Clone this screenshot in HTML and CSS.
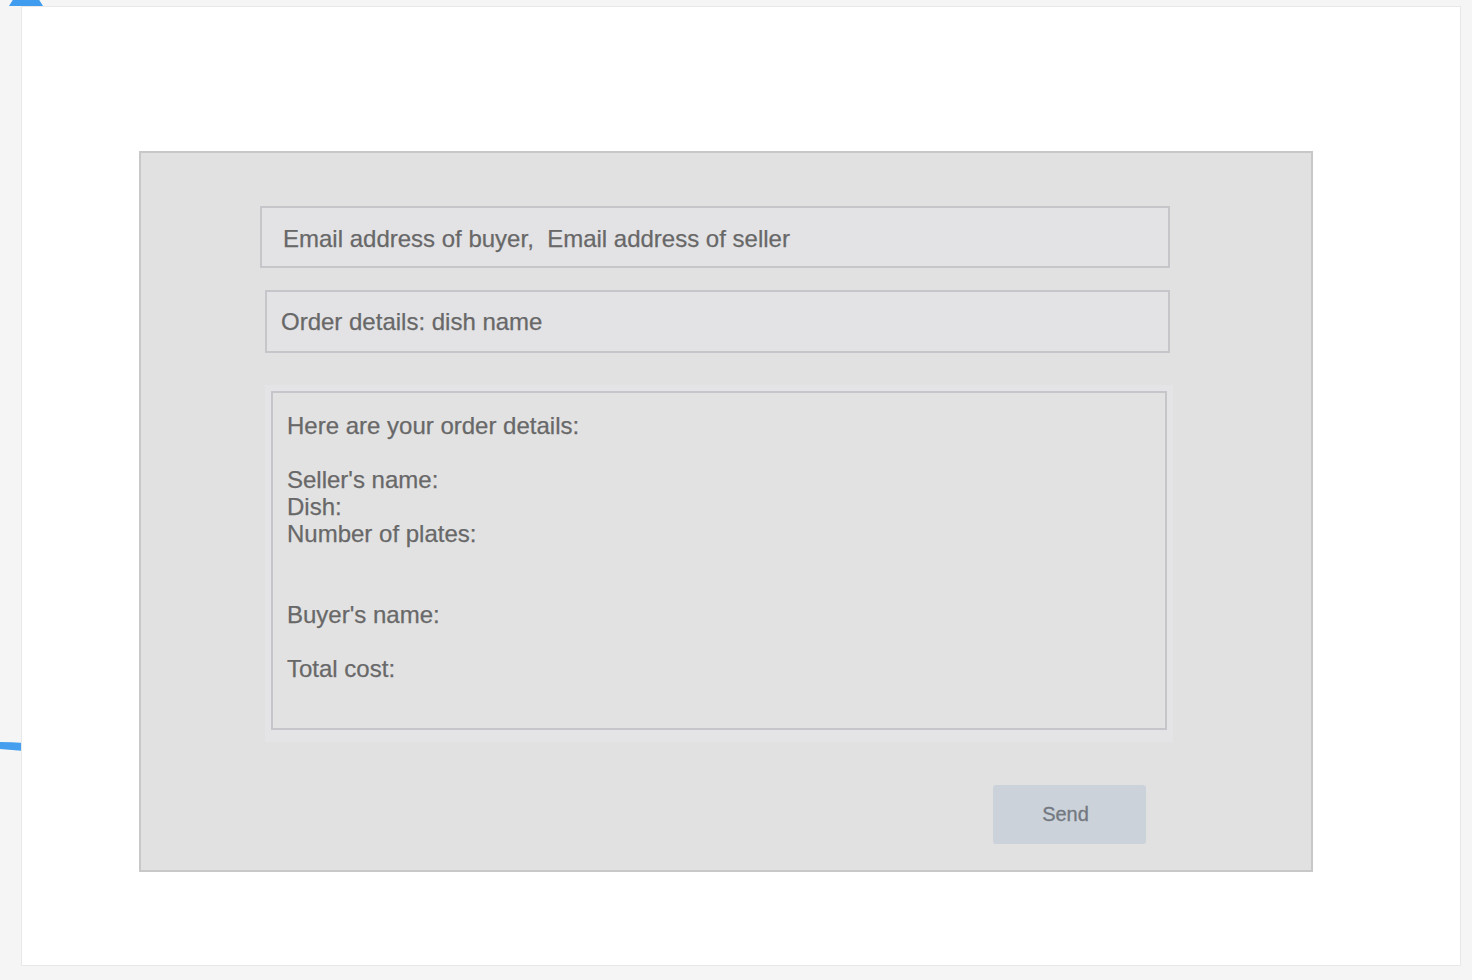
FILE: index.html
```html
<!DOCTYPE html>
<html lang="en">
<head>
<meta charset="utf-8">
<title>Order email</title>
<link rel="stylesheet" href="styles.css">
</head>
<body>
<svg class="deco deco-top" width="40" height="8" viewBox="0 0 40 8"><polygon points="0,8 5,0 29,0 34,8" fill="#3f9cef"/></svg>
<svg class="deco deco-left" width="24" height="12" viewBox="0 0 24 12"><path d="M0 1 Q12 1 24 2 L24 10 Q12 9 0 8 Z" fill="#459fee"/></svg>
<div class="card">
  <form class="panel">
    <div class="field field-1">Email address of buyer,&nbsp; Email address of seller</div>
    <div class="field field-2">Order details: dish name</div>
    <div class="area-wrap">
      <div class="area">Here are your order details:

Seller's name:
Dish:
Number of plates:


Buyer's name:

Total cost:</div>
    </div>
    <button type="button" class="send">Send</button>
  </form>
</div>
</body>
</html>
```
FILE: styles.css
```css
html, body {
  margin: 0;
  padding: 0;
}
body {
  background: #f5f5f5;
  font-family: "Liberation Sans", Arial, sans-serif;
  padding: 6px 11px 14px 21px;
  position: relative;
}
.deco {
  position: absolute;
  display: block;
}
.deco-top {
  left: 9px;
  top: -2px;
}
.deco-left {
  left: 0;
  top: 741px;
}
.card {
  position: relative;
  width: 1440px;
  height: 960px;
  box-sizing: border-box;
  background: #ffffff;
  border: 1px solid #e8e8e8;
  padding: 144px 0 0 117px;
}
.panel {
  width: 1174px;
  height: 721px;
  box-sizing: border-box;
  margin: 0;
  background: #e1e1e1;
  border: 2px solid #c8c8c8;
  display: flex;
  flex-direction: column;
  align-items: flex-start;
}
.field {
  box-sizing: border-box;
  background: #e3e3e6;
  border: 2px solid #c6c6ca;
  color: #686868;
  font-size: 24px;
  -webkit-text-stroke: 0.25px #686868;
  display: flex;
  align-items: center;
  white-space: nowrap;
}
.field-1 {
  margin: 53px 0 0 119px;
  width: 910px;
  height: 62px;
  padding: 4px 0 0 21px;
}
.field-2 {
  margin: 22px 0 0 124px;
  width: 905px;
  height: 63px;
  padding: 0 0 0 14px;
}
.area-wrap {
  margin: 32px 0 0 124px;
  padding: 6px 6px 12px 6px;
  background: #e4e4e7;
}
.area {
  box-sizing: border-box;
  width: 896px;
  height: 339px;
  background: #e2e2e3;
  border: 2px solid #c6c6ca;
  color: #686868;
  font-size: 24px;
  -webkit-text-stroke: 0.25px #686868;
  line-height: 27px;
  white-space: pre;
  padding: 19px 0 0 14px;
}
.send {
  margin: 43px 0 0 852px;
  width: 153px;
  height: 59px;
  background: #cbd2da;
  border: none;
  border-radius: 3px;
  color: #737880;
  font-family: "Liberation Sans", Arial, sans-serif;
  font-size: 20px;
  -webkit-text-stroke: 0.3px #737880;
  padding: 0 8px 0 0;
  cursor: pointer;
}
```
